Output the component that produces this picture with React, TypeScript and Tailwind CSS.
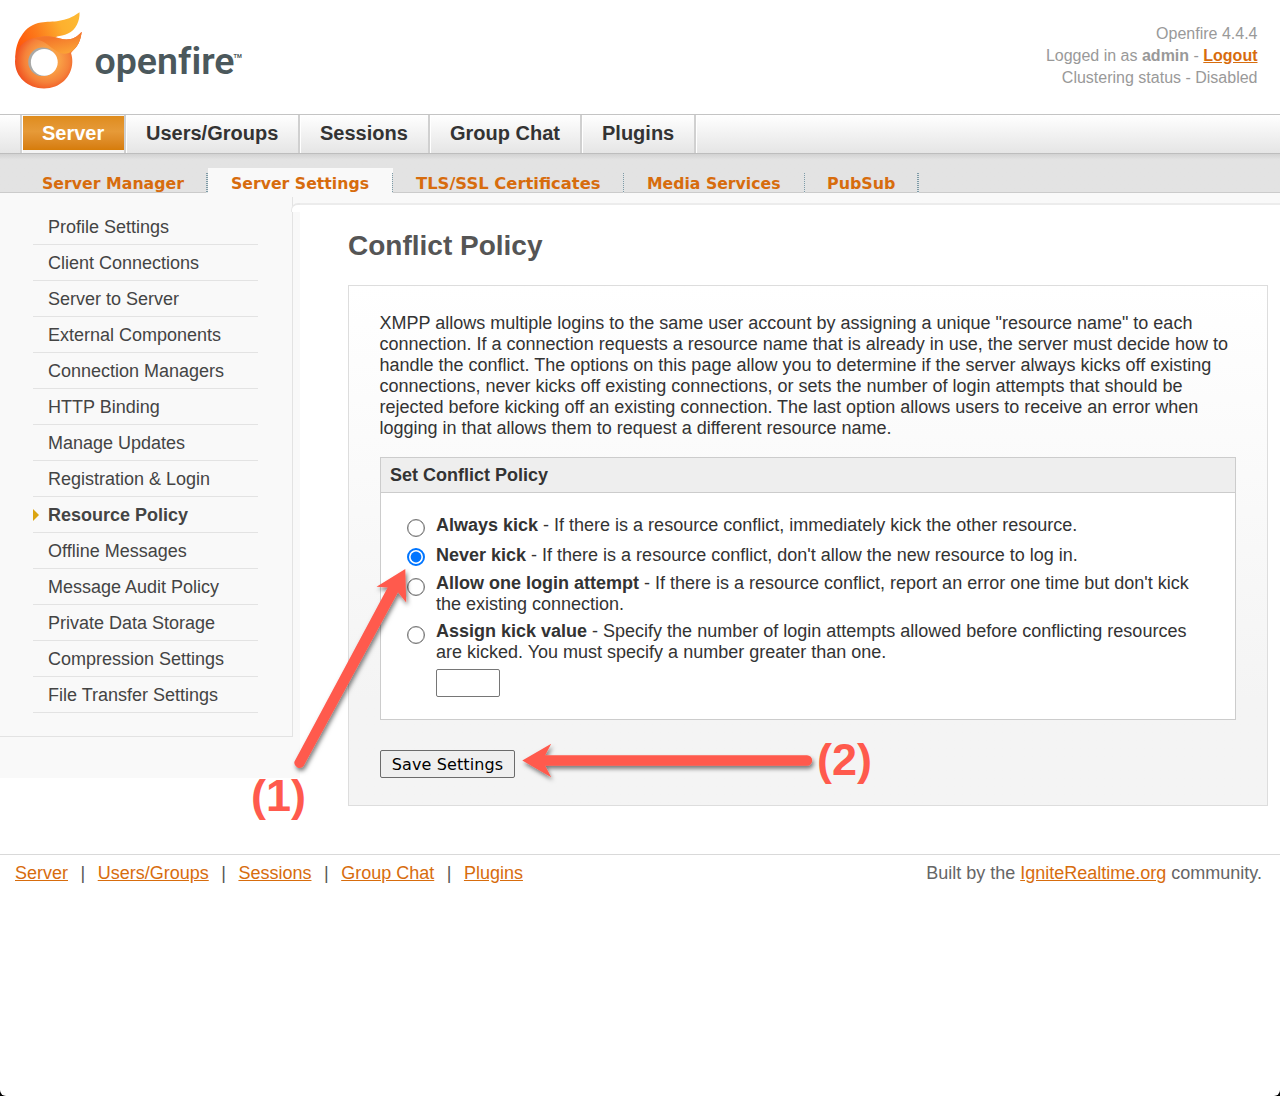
import React from "react";

const tabs = [
  { label: "Server", cell: "w-[103px]" },
  { label: "Users/Groups", cell: "w-[173px]" },
  { label: "Sessions", cell: "w-[129px]" },
  { label: "Group Chat", cell: "w-[151px]" },
  { label: "Plugins", cell: "w-[113px]" },
];

const subTabs = [
  { label: "Server Manager", cell: "w-[188px] pl-[22px]", text: "w-[142px]", len: 142 },
  { label: "Server Settings", cell: "w-[185px] pl-[23px]", text: "w-[139px]", len: 138 },
  { label: "TLS/SSL Certificates", cell: "w-[231px] pl-[23px]", text: "w-[185px]", len: 184.5 },
  { label: "Media Services", cell: "w-[181px] pl-[23px]", text: "w-[134px]", len: 133.5 },
  { label: "PubSub", cell: "w-[114px] pl-[22px]", text: "w-[69px]", len: 68.5 },
];

const sidebar = [
  "Profile Settings",
  "Client Connections",
  "Server to Server",
  "External Components",
  "Connection Managers",
  "HTTP Binding",
  "Manage Updates",
  "Registration & Login",
  "Resource Policy",
  "Offline Messages",
  "Message Audit Policy",
  "Private Data Storage",
  "Compression Settings",
  "File Transfer Settings",
];

const footerLinks = ["Server", "Users/Groups", "Sessions", "Group Chat", "Plugins"];

function Logo() {
  return (
    <svg width="260" height="100" viewBox="0 0 260 100" className="block">
      <defs>
        <linearGradient id="flame" x1="20" y1="45" x2="76" y2="22" gradientUnits="userSpaceOnUse">
          <stop offset="0" stopColor="#ff5a0c" />
          <stop offset="0.35" stopColor="#fc7d1c" />
          <stop offset="0.75" stopColor="#fdb02e" />
          <stop offset="1" stopColor="#fdb833" />
        </linearGradient>
        <radialGradient id="ring" cx="47" cy="60" r="32" gradientUnits="userSpaceOnUse">
          <stop offset="0.4" stopColor="#f9a046" />
          <stop offset="0.7" stopColor="#f5823a" />
          <stop offset="1" stopColor="#f1501f" />
        </radialGradient>
        <linearGradient id="tail" x1="58" y1="37" x2="62" y2="54" gradientUnits="userSpaceOnUse">
          <stop offset="0" stopColor="#f4772a" />
          <stop offset="1" stopColor="#fba236" />
        </linearGradient>
      </defs>
      <path
        d="M15.300 58C15.300 48 18 41 21 36.500C26 28 33 23.500 41 22.500C53 21 65 23 79.500 12.300C80 21 76 30 68 33.500C64 35.500 60 36 57 36.500L44 46L24 50Z"
        fill="url(#flame)"
      />
      <path
        d="M15 61.500C15 49 23 39.500 36.700 37.500C48 35 54 37 60 38.500C69 41 76 38.500 81.700 31.700C80.500 41 78 46 73 50.500L71 53C72 56 72.400 59 72.300 62C72 77 60 88.500 44 88.500C28 88.500 15 77 15 61.500Z"
        fill="url(#ring)"
      />
      <path
        d="M33 38.500C48 35 54 37 60 38.500C69 41 76 38.500 81.700 31.700C80.500 41 78 46 73 50.500C68 54.500 63 54.500 58 52C50 48 47 41 33 38.500Z"
        fill="url(#tail)"
      />
      <circle cx="42.500" cy="61.800" r="14.300" fill="#a9a9a7" />
      <circle cx="44.300" cy="62.300" r="13.400" fill="#fff" />
      <text
        x="94.500"
        y="74"
        textLength="140"
        lengthAdjust="spacingAndGlyphs"
        fontSize="37.500"
        fontWeight="600"
        fill="#4b585c"
        fontFamily="Roboto, sans-serif"
        className="[font-variant-ligatures:none]"
      >
        openfire
      </text>
      <text x="233.500" y="57.500" fontSize="5.500" fontWeight="700" fill="#4b565a" fontFamily="Roboto, sans-serif">
        TM
      </text>
    </svg>
  );
}

function Radio({ checked = false, className }: { checked?: boolean; className: string }) {
  return (
    <span
      className={
        "flex size-[18px] shrink-0 items-center justify-center rounded-full bg-white " +
        (checked ? "border-2 border-[#0075ff] " : "border border-[#767676] ring-[0.3px] ring-inset ring-[#767676] ") +
        className
      }
    >
      {checked && (
        <svg width="12" height="12" viewBox="0 0 12 12" className="shrink-0">
          <circle cx="6" cy="6" r="5.400" fill="#0075ff" />
        </svg>
      )}
    </span>
  );
}

function Option({
  title,
  checked,
  row,
  radio,
  children,
}: {
  title: string;
  checked?: boolean;
  row: string;
  radio: string;
  children: React.ReactNode;
}) {
  return (
    <label className={"flex items-start " + row}>
      <Radio checked={checked} className={radio} />
      <span className="ml-[11px] whitespace-nowrap">
        <b>{title}</b> - {children}
      </span>
    </label>
  );
}

function Annotations() {
  return (
    <div className="pointer-events-none absolute inset-0">
      <svg width="1280" height="900" viewBox="0 0 1280 900" className="block">
        <defs>
          <filter id="shadow" x="-20%" y="-20%" width="140%" height="160%">
            <feDropShadow dx="1.500" dy="3" stdDeviation="2" floodColor="#000" floodOpacity="0.5" />
          </filter>
        </defs>
        <g fill="#ff5a4d" filter="url(#shadow)">
          <path d="M405.300 569L376.500 586.700L387.700 587.500L294.500 761.500A5.200 5.200 0 0 0 303.600 766L398 592.300L406.200 602.500Z" />
          <path d="M522.300 760.500L551.200 743.700L545.200 755.300L807 755.300A5.200 5.200 0 0 1 807 765.700L545.200 765.700L551.200 777.200Z" />
        </g>
      </svg>
      <span className="absolute left-[251px] top-[770px] text-[45px] font-bold leading-[52px] text-[#ff5a4d]">(1)</span>
      <span className="absolute left-[817px] top-[734px] text-[45px] font-bold leading-[52px] text-[#ff5a4d]">(2)</span>
    </div>
  );
}

export default function App() {
  return (
    <div className="h-[1096px] w-[1280px] overflow-hidden bg-black">
      <div className="relative h-[1096px] rounded-b-[6px] bg-white font-['Liberation_Sans',Arial,sans-serif] text-[18px] leading-[21px] text-[#333]">
        <header className="flex h-[114px] justify-between">
          <Logo />
          <div className="mr-[22.5px] mt-[23px] text-right text-[16px] leading-[22px] text-[#999]">
            <p>Openfire 4.4.4</p>
            <p>
              Logged in as <b>admin</b> - <a className="font-bold text-[#d76c0d] underline">Logout</a>
            </p>
            <p>Clustering status - Disabled</p>
          </div>
        </header>

        <nav className="flex h-[40px] border-b border-t border-b-[#bdbdbd] border-t-[#c4c4c4] bg-gradient-to-b from-white to-[#e5e5e5] text-[20px] font-bold leading-[34px]">
          <div className="w-[22px] border-r-2 border-[#d3d3d3]" />
          {tabs.map((t, i) => (
            <div key={t.label} className={"box-content flex border-l border-l-white " + t.cell}>
              <div className={"w-full border-r-2 border-[#d0d0d0] pt-px " + (i === 0 ? "bg-[#f4f4f4]" : "")}>
                <div
                  className={
                    i === 0
                      ? "h-[34px] bg-gradient-to-b from-[#df8c1c] via-[#e69a38] via-45% to-[#d67c08] pl-[19px] text-white"
                      : "pl-[19px]"
                  }
                >
                  {t.label}
                </div>
              </div>
            </div>
          ))}
          <div className="w-px bg-white" />
        </nav>

        <nav className="flex h-[39px] items-end border-b border-[#cbcbcb] bg-gradient-to-b from-[#d2d2d2] via-[#e3e3e3] via-15% to-[#e3e3e3] pl-[20px] shadow-[0_1px_1px_#eeeeee]">
          {subTabs.map((t, i) => (
            <div
              key={t.label}
              className={
                "relative -mb-px flex h-[25px] items-end " + t.cell + (i === 1 ? " bg-[#f9f9f9]" : "")
              }
            >
              <svg height="20" className={"block overflow-visible " + t.text}>
                <text
                  x="0"
                  y="15.500"
                  textLength={t.len}
                  lengthAdjust="spacingAndGlyphs"
                  fontSize="16.500"
                  fontWeight="700"
                  fill="#d76c0d"
                  fontFamily="DejaVu Sans, sans-serif"
                >
                  {t.label}
                </text>
              </svg>
              <span
                className={
                  "absolute bottom-0 right-0 h-[20px] bg-[repeating-linear-gradient(to_bottom,#7f9aa5_0_1px,#dfe4e6_1px_2px)] " +
                  (i === 0 || i === 4 ? "w-[2px]" : "w-px")
                }
              />
            </div>
          ))}
        </nav>

        <div className="flex h-[585px] items-start bg-gradient-to-b from-[#f9f9f9] from-[11px] to-white to-[11px]">
          <aside className="h-[585px] w-[300px] shrink-0 bg-[#f9f9f9] pt-[4px]">
            <ul className="h-[540px] w-[293px] border-b border-r border-[#e3e3e3] pl-[33px] pt-[12px]">
              {sidebar.map((s) => (
                <li
                  key={s}
                  className="flex h-[36px] w-[225px] items-center border-b border-[#e3e3e3] text-[#444]"
                >
                  <span className="flex w-[15px]">
                    {s === "Resource Policy" && (
                      <svg width="6" height="12" viewBox="0 0 6 12" className="mt-px">
                        <path d="M0 0L6 6L0 12Z" fill="#dba512" />
                      </svg>
                    )}
                  </span>
                  <span className={"pt-[2px] " + (s === "Resource Policy" ? "font-bold" : "")}>{s}</span>
                </li>
              ))}
            </ul>
          </aside>
          <main className="relative mt-[10px] w-[980px] border-t-2 border-[#ececec] bg-white pl-[48px]">
            <span className="absolute -left-[9px] -top-[2px] h-[9px] w-[9px] rounded-tl-[7px] border-l border-t-2 border-[#e8e8e8] bg-white" />
            <h1 className="pt-[24px] text-[28px] font-bold leading-[34px] text-[#555]">Conflict Policy</h1>
            <section className="mt-[22px] h-[521px] w-[920px] border border-[#ddd] bg-gradient-to-b from-white to-[#f4f4f4] to-80% px-[31px] pt-[27px]">
              <p className="-ml-[0.5px] whitespace-nowrap">
                XMPP allows multiple logins to the same user account by assigning a unique "resource name" to each
                <br />
                connection. If a connection requests a resource name that is already in use, the server must decide how to
                <br />
                handle the conflict. The options on this page allow you to determine if the server always kicks off existing
                <br />
                connections, never kicks off existing connections, or sets the number of login attempts that should be
                <br />
                rejected before kicking off an existing connection. The last option allows users to receive an error when
                <br />
                logging in that allows them to request a different resource name.
              </p>
              <div className="mt-[18px] h-[263px] w-[856px] border border-[#ccc] bg-white">
                <h2 className="h-[35px] border-b border-[#ccc] bg-[#eee] pl-[9px] pt-[7px] font-bold">
                  Set Conflict Policy
                </h2>
                <div className="flex flex-col pl-[26px] pt-[22px]">
                  <Option title="Always kick" row="h-[30px]" radio="mt-[4px]">
                    If there is a resource conflict, immediately kick the other resource.
                  </Option>
                  <Option title="Never kick" row="h-[28px]" radio="mt-[3px]" checked>
                    If there is a resource conflict, don't allow the new resource to log in.
                  </Option>
                  <Option title="Allow one login attempt" row="h-[48px]" radio="mt-[5px]">
                    If there is a resource conflict, report an error one time but don't kick
                    <br />
                    the existing connection.
                  </Option>
                  <Option title="Assign kick value" row="h-[48px]" radio="mt-[5px]">
                    Specify the number of login attempts allowed before conflicting resources
                    <br />
                    are kicked. You must specify a number greater than one.
                  </Option>
                  <input className="ml-[29px] h-[28px] w-[64px] rounded-[2px] border border-[#767676] bg-white" />
                </div>
              </div>
              <button className="mt-[30px] flex h-[28px] w-[135px] items-center justify-center rounded-[2px] border border-[#6b6b6b] bg-[#efefef] font-['DejaVu_Sans',sans-serif] text-[16px] tracking-[0.1px] text-black">
                Save Settings
              </button>
            </section>
          </main>
        </div>

        <footer className="mt-[76px] flex justify-between border-t border-[#d9d9d9] pl-[15px] pr-[18px] pt-[8px] text-[#666]">
          <div className="flex">
            {footerLinks.map((l, i) => (
              <span key={l} className="flex">
                {i > 0 && <span className="w-[29.7px] text-center text-[#555]">|</span>}
                <a className="text-[#d76c0d] underline">{l}</a>
              </span>
            ))}
          </div>
          <p>
            Built by the <a className="text-[#d76c0d] underline">IgniteRealtime.org</a> community.
          </p>
        </footer>
        <Annotations />
      </div>
    </div>
  );
}
